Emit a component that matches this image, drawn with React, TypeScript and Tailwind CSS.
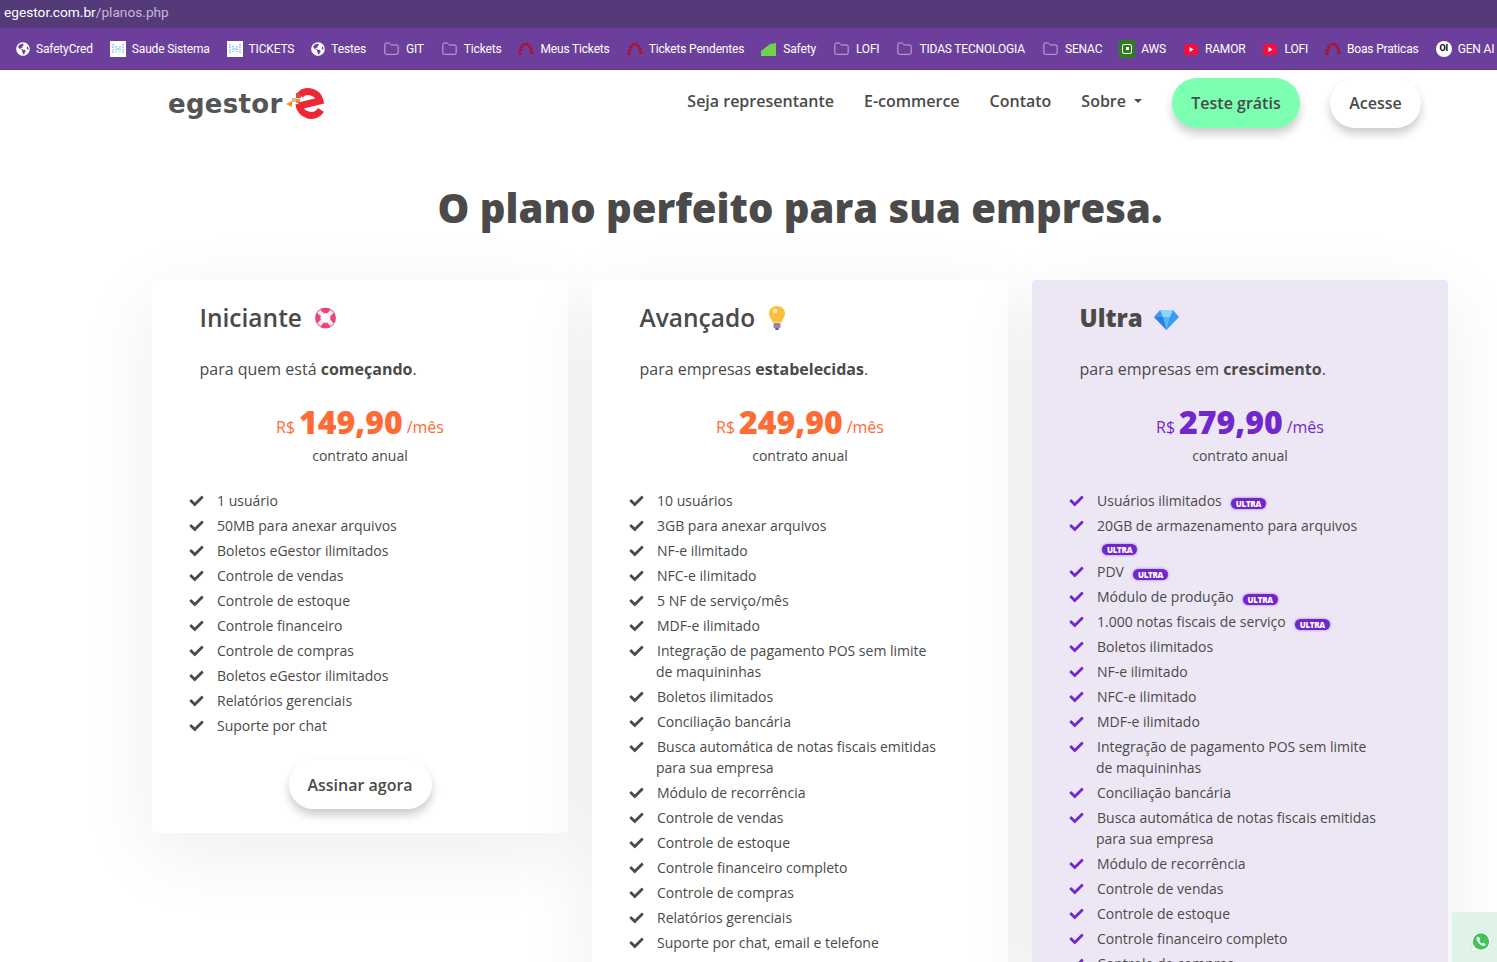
import React from 'react';
import { Folder } from 'lucide-react';
import { FaCheck, FaGlobeAmericas } from 'react-icons/fa';

type IconName = 'globe' | 'grid' | 'folder' | 'arch' | 'leaf' | 'aws' | 'yt' | 'ai';

const bookmarks: { icon: IconName; label: string }[] = [
  { icon: 'globe', label: 'SafetyCred' },
  { icon: 'grid', label: 'Saude Sistema' },
  { icon: 'grid', label: 'TICKETS' },
  { icon: 'globe', label: 'Testes' },
  { icon: 'folder', label: 'GIT' },
  { icon: 'folder', label: 'Tickets' },
  { icon: 'arch', label: 'Meus Tickets' },
  { icon: 'arch', label: 'Tickets Pendentes' },
  { icon: 'leaf', label: 'Safety' },
  { icon: 'folder', label: 'LOFI' },
  { icon: 'folder', label: 'TIDAS TECNOLOGIA' },
  { icon: 'folder', label: 'SENAC' },
  { icon: 'aws', label: 'AWS' },
  { icon: 'yt', label: 'RAMOR' },
  { icon: 'yt', label: 'LOFI' },
  { icon: 'arch', label: 'Boas Praticas' },
  { icon: 'ai', label: 'GEN AI' },
];

function BookmarkIcon({ name }: { name: IconName }) {
  if (name === 'globe') return <FaGlobeAmericas className="h-[14px] w-[14px] shrink-0 text-white" />;
  if (name === 'folder') return <Folder className="h-[16px] w-[17px] shrink-0 text-[#d5cbe2]" strokeWidth={1.2} />;
  if (name === 'grid')
    return (
      <span className="flex h-4 w-4 shrink-0 items-center justify-center bg-white">
        <svg viewBox="0 0 16 16" className="h-4 w-4">
          <path d="M3 3v10M6 5v6M8 7v3M10 5v6M13 3v10" stroke="#8cc4ee" strokeWidth="1.6" strokeDasharray="1.5 1" />
        </svg>
      </span>
    );
  if (name === 'arch')
    return (
      <svg viewBox="0 0 16 16" className="h-4 w-4 shrink-0">
        <path d="M2 14C2 7 5 3 8 3s6 4 6 11" fill="none" stroke="#b00f2a" strokeWidth="3" strokeDasharray="2.6 0.8" />
      </svg>
    );
  if (name === 'leaf')
    return (
      <svg viewBox="0 0 16 16" className="h-4 w-4 shrink-0">
        <path d="M0 10 9 3l6-1v13H0z" fill="#6fd14f" />
      </svg>
    );
  if (name === 'aws')
    return (
      <span className="flex h-[18px] w-4 shrink-0 items-center justify-center bg-[#2f7d1e]">
        <span className="flex h-[10px] w-[10px] items-center justify-center rounded-[2px] border border-white">
          <span className="h-[3px] w-[3px] bg-white" />
        </span>
      </span>
    );
  if (name === 'yt')
    return (
      <svg viewBox="0 0 16 16" className="h-4 w-4 shrink-0">
        <rect x="1" y="3" width="14" height="11" rx="3" fill="#f40f3c" />
        <path d="M6.5 6v5l4-2.5z" fill="#fff" />
      </svg>
    );
  return (
    <span className="flex h-4 w-4 shrink-0 items-center justify-center rounded-full bg-white text-[9px] font-bold leading-none text-black">
      OI
    </span>
  );
}

function LogoMark() {
  return (
    <svg viewBox="0 0 42 34" className="ml-[2px] h-[34px] w-[42px]">
      <path d="M1 17l6-3v6z" fill="#f7941d" />
      <rect x="7" y="11" width="4" height="4" fill="#f4b0a0" />
      <rect x="11" y="6" width="5" height="5" fill="#f04050" />
      <rect x="11" y="12" width="4" height="4" fill="#f7941d" />
      <rect x="16" y="2" width="4" height="4" fill="#f7a8a0" />
      <g fill="none" stroke="#ee2737" strokeWidth="7">
        <path d="M14 19L35 14A12 12 0 0 0 15 8" />
        <path d="M14 17A12 12 0 0 0 36 23" />
      </g>
    </svg>
  );
}

function Lifebuoy() {
  return (
    <svg viewBox="0 0 24 24" className="h-6 w-[23px]">
      <circle cx="12" cy="12" r="11" fill="#c9bccb" />
      <circle cx="12" cy="12" r="8" fill="none" stroke="#f0417f" strokeWidth="5.5" />
      <g stroke="#efe8f0" strokeWidth="4.5">
        <path d="M5 5l3.500 3.500M19 5l-3.500 3.500M5 19l3.500-3.500M19 19l-3.500-3.500" />
      </g>
      <circle cx="12" cy="12" r="5" fill="#fff" />
    </svg>
  );
}

function Bulb() {
  return (
    <svg viewBox="0 0 16 24" className="h-6 w-4">
      <path d="M8 0c4.500 0 8 3.200 8 7.500 0 3.500-2.500 5-3.500 9h-9C2.500 12.500 0 11 0 7.500 0 3.200 3.500 0 8 0z" fill="#fbbf3a" />
      <circle cx="6" cy="5" r="2.500" fill="#ffe79a" />
      <rect x="4.500" y="17" width="7" height="5" rx="1" fill="#9a82ad" />
      <rect x="6" y="22" width="4" height="2" rx="1" fill="#6f5a80" />
    </svg>
  );
}

function Diamond() {
  return (
    <svg viewBox="0 0 25 20" className="mt-[3px] h-5 w-[25px]">
      <path d="M6 0h13l6 7-12.500 13L0 7z" fill="#3b9bf0" />
      <path d="M6 0h13l-3 7H9z" fill="#8fd4fb" />
      <path d="M9 7h7l-3.500 13z" fill="#54b8f6" />
      <path d="M0 7h9l3.500 13z" fill="#2f7fe0" />
    </svg>
  );
}

function WhatsappIcon() {
  return (
    <svg viewBox="0 0 22 22" className="h-[22px] w-[22px]">
      <path d="M11 0.500a10 10 0 1 1-5 18.700L1 21l1.800-4.800A10 10 0 0 1 11 0.500z" fill="#fff" stroke="#c9d6cf" strokeWidth="0.5" />
      <circle cx="11" cy="10.500" r="8.200" fill="#3fc556" />
      <path d="M7.500 5.800c-1.300 1-1.300 2.700 0 4.700 1.300 2.100 3 3.500 5 4.200 1.500.5 2.800-.2 3.300-1.500l-2.400-1.500-1.100 1c-1.300-.6-2.300-1.700-3-3l1-1.100-1.300-2.700z" fill="#fff" />
    </svg>
  );
}

function UltraBadge({ wrapped }: { wrapped?: boolean }) {
  return (
    <span
      className={`inline-block rounded-full bg-[#7127cc] px-[5px] align-[-1px] text-[8px] font-extrabold leading-[11px] tracking-[-0.3px] text-white indent-0 shadow-[0_0_3px_rgba(113,39,204,0.6)] ${
        wrapped ? 'ml-[6px]' : 'ml-[9px]'
      }`}
    >
      ULTRA
    </span>
  );
}

type Feature = { text: string; ultra?: boolean; wrapped?: boolean };

const f = (text: string, ultra = false, wrapped = false): Feature => ({ text, ultra, wrapped });

const plans = [
  {
    name: 'Iniciante',
    nameClass: 'text-[24.5px] font-semibold',
    emoji: <Lifebuoy />,
    emojiGap: 'ml-[12px]',
    lead: 'para quem está ',
    strong: 'começando',
    price: '149,90',
    priceClass: 'text-[#ff6b35]',
    checkClass: 'text-[#4a4a4a]',
    cardClass: 'bg-white',
    features: [
      '1 usuário',
      '50MB para anexar arquivos',
      'Boletos eGestor ilimitados',
      'Controle de vendas',
      'Controle de estoque',
      'Controle financeiro',
      'Controle de compras',
      'Boletos eGestor ilimitados',
      'Relatórios gerenciais',
      'Suporte por chat',
    ].map((t) => f(t)),
    cta: true,
  },
  {
    name: 'Avançado',
    nameClass: 'text-[24.5px] font-semibold',
    emoji: <Bulb />,
    emojiGap: 'ml-[14px]',
    lead: 'para empresas ',
    strong: 'estabelecidas',
    price: '249,90',
    priceClass: 'text-[#ff6b35]',
    checkClass: 'text-[#4a4a4a]',
    cardClass: 'bg-white',
    features: [
      '10 usuários',
      '3GB para anexar arquivos',
      'NF-e ilimitado',
      'NFC-e ilimitado',
      '5 NF de serviço/mês',
      'MDF-e ilimitado',
      'Integração de pagamento POS sem limite de maquininhas',
      'Boletos ilimitados',
      'Conciliação bancária',
      'Busca automática de notas fiscais emitidas para sua empresa',
      'Módulo de recorrência',
      'Controle de vendas',
      'Controle de estoque',
      'Controle financeiro completo',
      'Controle de compras',
      'Relatórios gerenciais',
      'Suporte por chat, email e telefone',
    ].map((t) => f(t)),
    cta: false,
  },
  {
    name: 'Ultra',
    nameClass: 'text-[24px] font-extrabold',
    emoji: <Diamond />,
    emojiGap: 'ml-[11px]',
    lead: 'para empresas em ',
    strong: 'crescimento',
    price: '279,90',
    priceClass: 'text-[#7127cc]',
    checkClass: 'text-[#7127cc]',
    cardClass: 'bg-[#ede7f5]',
    features: [
      f('Usuários ilimitados', true),
      f('20GB de armazenamento para arquivos', true, true),
      f('PDV', true),
      f('Módulo de produção', true),
      f('1.000 notas fiscais de serviço', true),
      f('Boletos ilimitados'),
      f('NF-e ilimitado'),
      f('NFC-e ilimitado'),
      f('MDF-e ilimitado'),
      f('Integração de pagamento POS sem limite de maquininhas'),
      f('Conciliação bancária'),
      f('Busca automática de notas fiscais emitidas para sua empresa'),
      f('Módulo de recorrência'),
      f('Controle de vendas'),
      f('Controle de estoque'),
      f('Controle financeiro completo'),
      f('Controle de compras'),
    ],
    cta: false,
  },
];

export default function App() {
  return (
    <div className="relative h-[962px] w-[1497px] overflow-hidden bg-white font-['Open_Sans',sans-serif] text-[#4a4a4a]">
      {/* Browser chrome */}
      <div className="flex h-[28px] items-center bg-[#553a7a] pb-[4px] pl-[4px] font-['Roboto',sans-serif] text-[13.7px]">
        <span className="text-white">egestor.com.br</span>
        <span className="text-[#c5b8d6]">/planos.php</span>
      </div>
      <div className="flex h-[42px] items-center gap-[17px] overflow-hidden whitespace-nowrap border-b border-[#5f3590] bg-[#6d3f9c] pl-[16px] font-['Roboto',sans-serif] text-[12px] tracking-[-0.17px] text-white">
        {bookmarks.map((b, i) => (
          <div key={i} className="flex shrink-0 items-center gap-[6px]">
            <BookmarkIcon name={b.icon} />
            <span>{b.label}</span>
          </div>
        ))}
      </div>

      {/* Site nav */}
      <nav className="ml-[168px] flex h-[58px] w-[1253px] items-end justify-between">
        <div className="mb-[7px] flex items-center">
          <span className="font-['DejaVu_Sans',sans-serif] text-[26px] font-bold leading-none tracking-[0.3px] text-[#555]">egestor</span>
          <LogoMark />
        </div>
        <div className="flex items-center text-[16px] font-semibold">
          <div className="-mt-[5px] flex items-center gap-[30px]">
            <span>Seja representante</span>
            <span>E-commerce</span>
            <span>Contato</span>
            <span className="flex items-center gap-[8px]">
              Sobre
              <span className="mt-[1px] h-0 w-0 border-x-[4px] border-t-[4px] border-x-transparent border-t-[#4a4a4a]" />
            </span>
          </div>
          <button className="ml-[30px] h-[50px] w-[128px] rounded-[25px] bg-[#7bffb0] shadow-[0_6px_10px_rgba(0,0,0,0.2)]">Teste grátis</button>
          <button className="ml-[30px] h-[50px] w-[91px] rounded-[25px] bg-white shadow-[0_6px_10px_rgba(0,0,0,0.2)]">Acesse</button>
        </div>
      </nav>

      <div className="ml-[152px] w-[1296px]">
        <h1 className="mt-[50px] text-center text-[40px] font-extrabold leading-[60px]">O plano perfeito para sua empresa.</h1>

        <div className="mt-[42px] flex items-start gap-[24px]">
          {plans.map((p) => (
            <div key={p.name} className={`w-[416px] rounded-[4px] pb-[24px] pt-[20px] shadow-[0_20px_80px_rgba(0,0,0,0.07)] ${p.cardClass}`}>
              <div className="flex h-[36px] items-center pl-[47.5px]">
                <span className={p.nameClass}>{p.name}</span>
                <span className={p.emojiGap}>{p.emoji}</span>
              </div>
              <p className="mt-[21px] pl-[47.5px] text-[16px] leading-[24px]">
                {p.lead}
                <b className="font-bold">{p.strong}</b>.
              </p>
              <div className={`mt-[21px] flex h-[40px] items-center justify-center ${p.priceClass}`}>
                <span className="mt-[9px] text-[16px]">R$</span>
                <span className="mx-[4px] text-[32px] font-extrabold">{p.price}</span>
                <span className="mt-[9px] text-[16px]">/mês</span>
              </div>
              <p className="mt-[3px] text-center text-[14px] leading-[21px]">contrato anual</p>
              <ul className="ml-[37px] mt-[24px] flex w-[312px] flex-col gap-[4px] text-[14px] leading-[21px]">
                {p.features.map((it) => (
                  <li key={it.text} className="pl-[27px] -indent-[27px]">
                    <span className="inline-flex w-[28px] justify-start indent-0 align-[-2px]">
                      <FaCheck className={`h-[14px] w-[15px] ${p.checkClass}`} />
                    </span>
                    {it.text}
                    {it.ultra && <UltraBadge wrapped={it.wrapped} />}
                  </li>
                ))}
              </ul>
              {p.cta && (
                <div className="mt-[24px] flex justify-center">
                  <button className="h-[49px] w-[143px] rounded-full bg-white text-[16px] font-semibold shadow-[0_6px_10px_rgba(0,0,0,0.2)]">
                    Assinar agora
                  </button>
                </div>
              )}
            </div>
          ))}
        </div>
      </div>

      {/* WhatsApp floating widget */}
      <div className="absolute bottom-0 right-0 flex h-[50px] w-[45px] items-center justify-end rounded-tl-[4px] bg-[#e0f3e8] pr-[5px] pt-[10px]">
        <WhatsappIcon />
      </div>
    </div>
  );
}
